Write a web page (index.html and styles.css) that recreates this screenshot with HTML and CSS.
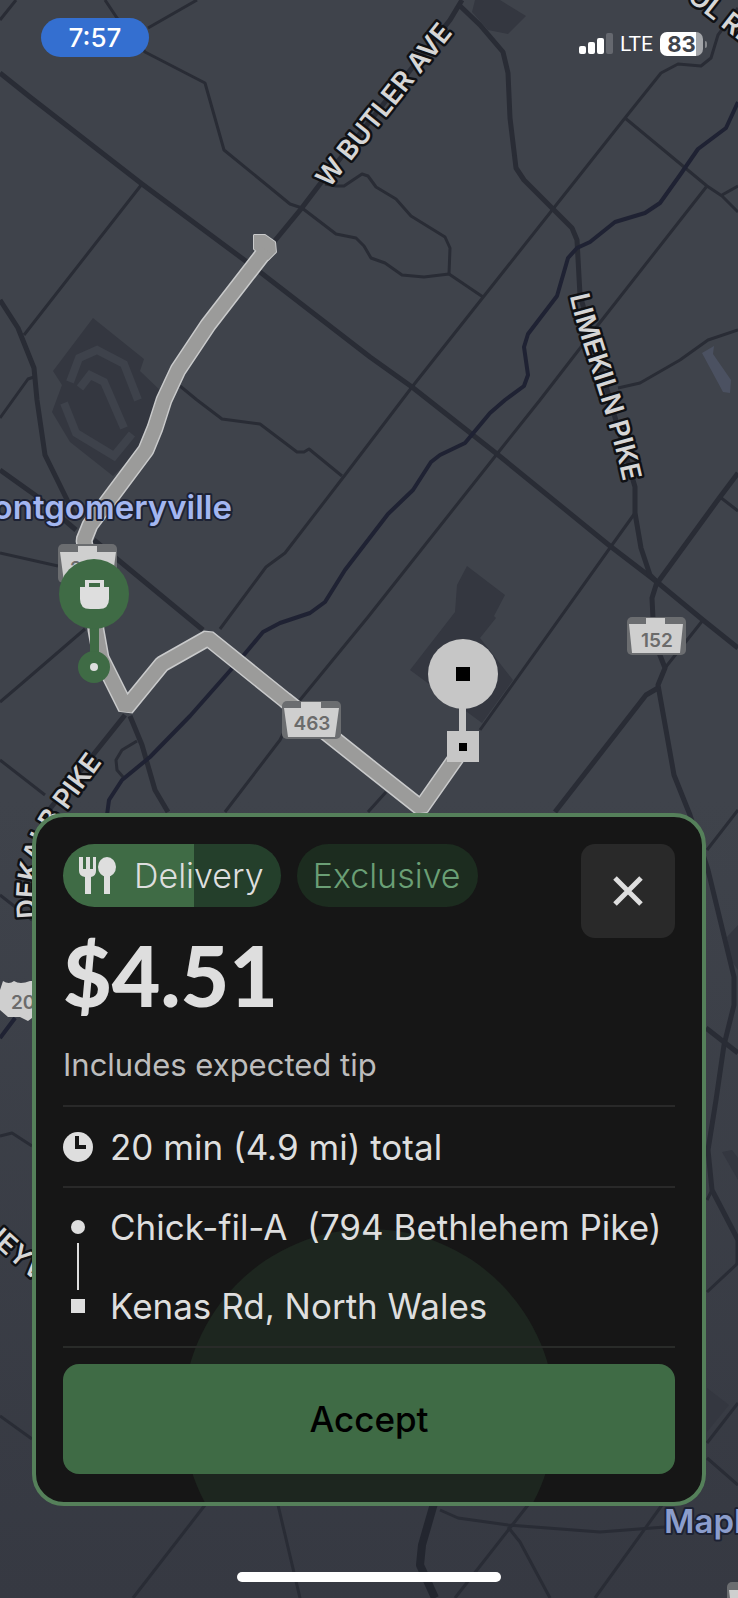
FILE: index.html
```html
<!DOCTYPE html>
<html lang="en">
<head>
  <meta charset="UTF-8">
  <meta name="viewport" content="width=device-width, initial-scale=1">
  <title>Delivery offer</title>
  <link rel="stylesheet" href="styles.css">
</head>
<body>
  <div class="screen">
    <svg class="map" viewBox="0 0 738 1598" preserveAspectRatio="xMidYMin slice" aria-hidden="true">
      <!-- parcels -->
      <g class="parcel">
        <path d="M93 318L144 359 140 371 163 393 150 440 113 476 70 442 52 412 62 385 53 371Z"/>
        <path d="M475 0H500L526 16 508 34 488 30 472 12Z"/>
        <path d="M467 566L505 595 494 616 496 618 480 638 513 680 482 723 410 670 455 612 457 585Z"/>
        <path d="M738 925L727 937 731 960 738 970Z"/>
        <path d="M722 1152L732 1150 738 1158V1180Z"/>
        <path d="M707 1388L729 1405 707 1432Z"/>
      </g>
      <path class="parcel-gap" d="M70 382L79 358 97 350 124 364 138 400M64 403L76 433 114 456 132 434M80 388L90 375 104 382 124 428"/>
      <path class="pond" d="M702 353L714 346 713 354 731 380 730 393 723 392Z"/>

      <!-- side roads -->
      <g class="road">
        <path d="M0 20L16 0M105 0L117 18 145 52 205 83 224 150 290 204 302 208 336 234 356 238 364 246 371 258 385 263 402 275 424 277 449 274 483 297"/>
        <path d="M449 274L450 248 445 237 411 216 396 199 376 187 368 176 362 174 344 186 336 186 325 184"/>
        <path d="M148 28L197 0M142 184L24 335M0 418L28 379 34 377"/>
        <path d="M738 8L718 35 711 58 701 66 678 64 661 73 625 118 553 209 412 387 345 475 285 553 266 567 220 629"/>
        <path d="M625 118L707 186 722 196 738 212M722 195L738 186"/>
        <path d="M707 186L598 325 540 400 497 454 368 617 300 700 280 740 225 812"/>
        <path d="M618 388L640 383 680 360 708 340 738 330"/>
        <path d="M180 386L197 400 222 419 260 424 297 452 304 452 309 449 342 476"/>
        <path d="M0 553L58 566M0 702L20 685 85 629M0 760L45 795M137 741L122 750 116 760 117 770 123 777"/>
        <path d="M635 513L612 545 480 730M386 792L368 812M720 497L738 511M703 620L665 668"/>
        <path d="M738 810L707 850M0 895L32 920M0 1038L15 1018M0 1136L12 1133 32 1146M0 1416L32 1439"/>
        <path d="M205 1505L133 1598M278 1505L300 1598M440 1510L458 1518 508 1525 600 1532 665 1527"/>
        <path d="M528 1505L455 1598M508 1527L520 1542 550 1598M662 1505L595 1598"/>
        <path d="M738 1403L707 1443M707 1458L738 1485M707 1292L738 1263M707 1200L712 1190"/>
      </g>

      <!-- main roads -->
      <g class="road road-main">
        <path d="M0 73L30 97 142 184 247 262 370 357 412 387 497 454 610 546 657 582 703 620 738 648"/>
        <path d="M0 300L18 328 34 368 37 400 45 455 76 518M0 470L35 495 76 530M94 540L203 630"/>
        <path d="M273 243L301 209 320 184 450 20 462 0"/>
        <path d="M458 4L480 25 503 52 508 73 510 118 516 168 524 180 553 209 572 228 577 240 580 295 610 400 635 487V513L641 548 650 575 657 582 652 598 654 640 665 668 658 685 674 775 690 815 708 870 734 977V1005L724 1045 716 1100 708 1150 712 1190 738 1240V1265"/>
        <path d="M738 473L720 497 658 582M658 688L646 695 555 812M706 1028L738 1053"/>
        <path d="M125 715L93 755 45 815M130 716L142 745 155 790 168 812"/>
      </g>
      <path class="road road-wide" d="M435 1500L422 1545 420 1565 435 1598"/>
      <path class="river" d="M738 102L726 128 698 149 680 175 660 203 645 213 615 222 590 242 577 248 568 258 557 296 528 334 524 347 528 375 524 386 505 400 490 413 465 443 440 455 431 462 413 490 388 514 345 570 325 602 310 613 280 623 263 632 243 656 190 716 150 757 122 780 109 800 107 815"/>
      <path class="river" d="M0 1038L15 1018"/>

      <!-- route -->
      <g class="route-edge">
        <path class="route-start" d="M254 235H265L275 242 276 252 268 260 254 249Z"/>
        <path d="M266 250L208 325 178 370 164 400 155 428 146 450 90 525 84 540 92 590 96 630 101 658 126 708 162 664 208 638 285 700 368 766 421 808 463 748"/>
      </g>
      <g class="route">
        <path class="route-start" d="M254 235H265L275 242 276 252 268 260 254 249Z"/>
        <path d="M266 250L208 325 178 370 164 400 155 428 146 450 90 525 84 540 92 590 96 630 101 658 126 708 162 664 208 638 285 700 368 766 421 808 463 748"/>
      </g>

      <!-- street names -->
      <path id="butler" fill="none" d="M329 189L472 9"/>
      <path id="limekiln" fill="none" d="M570 296C579 343 612 415 630 515"/>
      <path id="dekalb" fill="none" d="M37 918Q30 866 60 820L120 738"/>
      <g class="street">
        <text><textPath href="#butler">W BUTLER AVE</textPath></text>
        <text><textPath href="#limekiln">LIMEKILN PIKE</textPath></text>
        <text><textPath href="#dekalb">DEKALB PIKE</textPath></text>
        <text transform="translate(654 -26) rotate(38)">COOL RD</text>
        <text transform="translate(-20 1232) rotate(42)">HEYVE</text>
      </g>

      <!-- route shields -->
      <g>
        <rect class="shield-back" x="58" y="544" width="59" height="39" rx="5"/>
        <path class="shield-face" d="M60 552H78V546H97V552H116L112 582H64Z"/>
        <text class="shield-text" x="88" y="575">202</text>
      </g>
      <g>
        <rect class="shield-back" x="282" y="701" width="59" height="38" rx="5"/>
        <path class="shield-face" d="M284 708H301V702H321V708H339L335 737H288Z"/>
        <text class="shield-text" x="312" y="730">463</text>
      </g>
      <g>
        <rect class="shield-back" x="627" y="617" width="59" height="38" rx="5"/>
        <path class="shield-face" d="M629 624H646V618H665V624H683L680 653H632Z"/>
        <text class="shield-text" x="657" y="647">152</text>
      </g>
      <path class="shield-face" d="M3 981Q9 985 14 981 20 985 30 981L40 981V1012L28 1021 20 1017H8L0 1010V990Z"/>
      <text class="shield-text" x="29" y="1009">202</text>
      <rect class="shield-back" x="727" y="1582" width="30" height="30" rx="5"/>
      <path class="shield-face" d="M729 1590H750V1598H730Z"/>

      <!-- towns -->
      <text class="town" x="232" y="519" text-anchor="end">Montgomeryville</text>
      <text class="town town-dim" x="664" y="1533">Maple Glen</text>

      <!-- pickup pin -->
      <g class="pickup">
        <rect x="90" y="620" width="9" height="40"/>
        <circle cx="94" cy="667" r="16"/>
        <circle cx="94" cy="594" r="35"/>
      </g>
      <circle class="pickup-icon" cx="94" cy="667" r="4"/>
      <path class="pickup-icon" fill-rule="evenodd" d="M80 587H85V580H104V587H109V599Q109 609 99 609H90Q80 609 80 599ZM89 583V587H100V583Z"/>

      <!-- dropoff pin -->
      <g class="dropoff">
        <rect x="459" y="700" width="7" height="35"/>
        <circle cx="463" cy="674" r="35"/>
        <rect x="447" y="731" width="32" height="31"/>
      </g>
      <path d="M456 667H470V681H456ZM459 743H467V751H459Z"/>
    </svg>

    <header class="status-bar">
      <div class="clock">7:57</div>
      <div class="indicators">
        <svg class="signal" viewBox="0 0 34 22" aria-hidden="true">
          <rect x="0" y="13" width="7" height="8" rx="2"/>
          <rect x="9" y="9" width="7" height="12" rx="2"/>
          <rect x="18" y="5" width="7" height="16" rx="2"/>
          <rect x="27" y="0" width="7" height="21" rx="2" opacity="0.2"/>
        </svg>
        <span class="network">LTE</span>
        <span class="battery">83</span>
      </div>
    </header>

    <main class="offer">
      <span class="ripple"></span>
      <div class="offer-top">
        <div class="offer-summary">
          <div class="tags">
            <span class="tag tag-delivery">
              <svg class="tag-icon" viewBox="0 0 37 37" aria-hidden="true">
                <path d="M0 0H4V12H7V0H11V12H14V0H17V14Q17 19 12 20V37H6V20Q0 19 0 14Z"/>
                <ellipse cx="28" cy="10" rx="9" ry="10"/>
                <path d="M25 17H31V37H25Z"/>
              </svg>
              Delivery
            </span>
            <span class="tag tag-exclusive">Exclusive</span>
          </div>
          <h1 class="price">$4.51</h1>
          <p class="note">Includes expected tip</p>
        </div>
        <button class="close-btn" type="button" aria-label="Close">
          <svg viewBox="0 0 30 30" aria-hidden="true"><path d="M2 2L28 28M28 2L2 28"/></svg>
        </button>
      </div>

      <div class="row">
        <svg class="row-icon" viewBox="0 0 30 30" aria-hidden="true">
          <circle cx="15" cy="15" r="15"/>
          <path class="hands" d="M14 4V15H23"/>
        </svg>
        <span>20 min (4.9 mi) total</span>
      </div>

      <div class="stops">
        <svg class="stops-icon" viewBox="0 0 30 158" aria-hidden="true">
          <circle cx="15" cy="39" r="7"/>
          <path d="M14 55H16V102H14ZM8 111H22V125H8Z"/>
        </svg>
        <div class="stops-list">
          <div class="stop">Chick-fil-A&nbsp; (794 Bethlehem Pike)</div>
          <div class="stop">Kenas Rd, North Wales</div>
        </div>
      </div>

      <button class="accept-btn" type="button">Accept</button>
    </main>

    <div class="home-bar"></div>
  </div>
</body>
</html>
```
FILE: styles.css
```css
* {
  box-sizing: border-box;
}
body {
  margin: 0;
  font-family: Inter, "Liberation Sans", sans-serif;
  background: #3f424b;
}
.screen {
  position: relative;
  display: flex;
  flex-direction: column;
  min-height: 100vh;
  padding: 18px 32px 16px;
  overflow: hidden;
  background: linear-gradient(#3f434b 50%, #363942);
}

/* map */
.map {
  position: absolute;
  inset: 0;
  width: 100%;
  height: 100%;
}
.parcel {
  fill: #343740;
}
.parcel-gap {
  fill: none;
  stroke: #3e424b;
  stroke-width: 8px;
}
.pond {
  fill: #4b5161;
}
.road {
  fill: none;
  stroke: #292c35;
  stroke-width: 3px;
  stroke-linejoin: round;
}
.road-main {
  stroke-width: 5px;
}
.road-wide {
  stroke: #23262f;
  stroke-width: 8px;
}
.river {
  fill: none;
  stroke: #1f2233;
  stroke-width: 4px;
  stroke-linejoin: round;
}
.route,
.route-edge {
  fill: none;
  stroke: #9b9b9a;
  stroke-width: 14px;
  stroke-linejoin: bevel;
}
.route-edge {
  stroke: #c9cacb;
  stroke-width: 17px;
}
.route-start {
  fill: #9b9b9a;
  stroke-width: 0;
}
.route-edge .route-start {
  stroke-width: 2px;
}
.street {
  font-size: 27px;
  font-weight: 600;
  fill: #d6d6d6;
  stroke: #101114;
  stroke-width: 5px;
  stroke-linejoin: round;
  paint-order: stroke;
}
.town {
  font-size: 33px;
  font-weight: 600;
  fill: #a3b6f0;
  stroke: #1d2233;
  stroke-width: 4px;
  stroke-linejoin: round;
  paint-order: stroke;
}
.town-dim {
  fill: #8b9dcc;
}
.shield-back {
  fill: #6b6d70;
}
.shield-face {
  fill: #cfcfcf;
}
.shield-text {
  font-size: 19px;
  font-weight: 600;
  fill: #6b6b6b;
  text-anchor: middle;
}
.pickup {
  fill: #3f6b45;
}
.pickup-icon {
  fill: #dedede;
}
.dropoff {
  fill: #c6c6c6;
}

/* status bar */
.status-bar {
  position: relative;
  display: flex;
  justify-content: space-between;
  align-items: flex-start;
  padding-left: 9px;
}
.clock {
  width: 108px;
  border-radius: 20px;
  background: #346fd0;
  color: #fff;
  font-size: 26px;
  font-weight: 500;
  line-height: 39px;
  text-align: center;
}
.indicators {
  display: flex;
  align-items: center;
  gap: 7px;
  padding-top: 14px;
  color: #fff;
}
.signal {
  width: 34px;
  height: 22px;
  fill: #fff;
}
.network {
  font-family: Roboto, sans-serif;
  font-size: 21px;
  line-height: 24px;
}
.battery {
  position: relative;
  width: 43px;
  margin-right: 3px;
  border-radius: 7px;
  background: linear-gradient(to right, #fff 83%, #a3a5a9 83%);
  color: #3f434b;
  font-size: 22px;
  font-weight: 700;
  line-height: 24px;
  text-align: center;
}
.battery::after {
  content: "";
  position: absolute;
  top: 9px;
  right: -4px;
  width: 2px;
  height: 7px;
  border-radius: 0 2px 2px 0;
  background: #85878c;
}

/* offer card */
.offer {
  position: relative;
  margin-top: auto;
  padding: 27px 27px 28px;
  border: 4px solid #55805a;
  border-radius: 32px;
  background: #161616;
  color: #dedede;
  overflow: hidden;
}
.offer > * {
  position: relative;
}
.offer > .ripple {
  position: absolute;
  left: 50%;
  bottom: -99px;
  width: 372px;
  height: 372px;
  margin-left: -186px;
  border-radius: 50%;
  background: #1d261f;
}
.offer-top {
  display: flex;
  justify-content: space-between;
  align-items: flex-start;
  padding-bottom: 20px;
}
.tags {
  display: flex;
  gap: 16px;
}
.tag {
  display: flex;
  align-items: center;
  height: 63px;
  padding: 0 17px 0 16px;
  border-radius: 32px;
  font-size: 34px;
  font-weight: 300;
}
.tag-delivery {
  gap: 18px;
  background: linear-gradient(to right, #3f6b45 60%, #243f2b 60%);
}
.tag-icon {
  width: 37px;
  height: 37px;
  fill: #dedede;
}
.tag-exclusive {
  background: #1c2c1f;
  color: #6a9f75;
}
.price {
  margin: 20px 0 22px;
  font-family: Lato, sans-serif;
  font-size: 84px;
  font-weight: 900;
  line-height: 96px;
}
.note {
  margin: 0;
  color: #bdbdbd;
  font-size: 31px;
  line-height: 40px;
}
.close-btn {
  display: flex;
  align-items: center;
  justify-content: center;
  width: 94px;
  height: 94px;
  border: none;
  border-radius: 14px;
  background: #292929;
  cursor: pointer;
}
.close-btn svg {
  width: 30px;
  height: 30px;
  stroke: #dedede;
  stroke-width: 5px;
}
.row,
.stops {
  display: flex;
  align-items: center;
  gap: 17px;
  border-top: 2px solid #292929;
  font-size: 35px;
}
.row {
  height: 81px;
}
.row-icon {
  width: 30px;
  height: 30px;
  fill: #dedede;
}
.hands {
  fill: none;
  stroke: #161616;
  stroke-width: 4px;
}
.stops {
  margin-bottom: 16px;
  border-bottom: 2px solid #292b29;
}
.stops-icon {
  width: 30px;
  height: 158px;
  fill: #dedede;
}
.stop {
  line-height: 79px;
  white-space: nowrap;
}
.accept-btn {
  display: block;
  width: 100%;
  height: 110px;
  border: none;
  border-radius: 16px;
  background: #3f6b45;
  color: #000;
  font-family: inherit;
  font-size: 35px;
  font-weight: 500;
  cursor: pointer;
}
.home-bar {
  position: relative;
  align-self: center;
  width: 264px;
  height: 10px;
  margin-top: 66px;
  border-radius: 5px;
  background: #fff;
}
```
